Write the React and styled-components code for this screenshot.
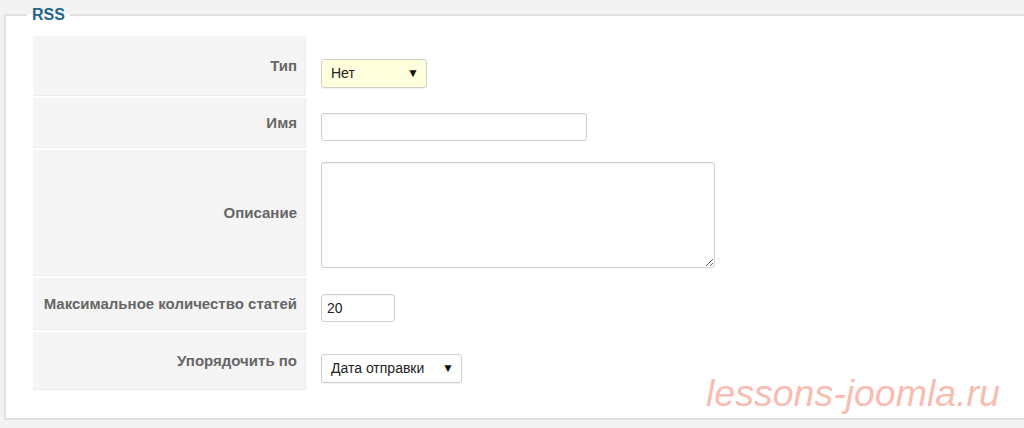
import React from 'react';
import styled, { createGlobalStyle } from 'styled-components';

const GlobalStyle = createGlobalStyle`
  html, body {
    margin: 0;
    padding: 0;
    background: #f3f3f3;
    overflow: hidden;
  }
  body {
    font-family: "Liberation Sans", Arial, sans-serif;
  }
`;

const fields = [
  { label: 'Тип', height: 60, control: 'type' },
  { label: 'Имя', height: 50, control: 'name' },
  { label: 'Описание', height: 126, control: 'description' },
  { label: 'Максимальное количество статей', height: 52, control: 'count' },
  { label: 'Упорядочить по', height: 58, control: 'order' },
];

export default function App() {
  const renderControl = (kind) => {
    switch (kind) {
      case 'type':
        return (
          <Select width={106} highlight>
            <span>Нет</span>
            <Arrow>▼</Arrow>
          </Select>
        );
      case 'name':
        return <TextInput width={266} />;
      case 'description':
        return <TextArea />;
      case 'count':
        return <TextInput width={74} defaultValue="20" />;
      case 'order':
        return (
          <Select width={141}>
            <span>Дата отправки</span>
            <Arrow>▼</Arrow>
          </Select>
        );
      default:
        return null;
    }
  };

  return (
    <>
      <GlobalStyle />
      <Page>
        <Fieldset>
          <Legend>RSS</Legend>
          <Table>
            {fields.map((f) => (
              <Row key={f.label} height={f.height}>
                <Key>{f.label}</Key>
                <Value>{renderControl(f.control)}</Value>
              </Row>
            ))}
          </Table>
        </Fieldset>
        <Watermark>lessons-joomla.ru</Watermark>
      </Page>
    </>
  );
}

const Page = styled.div`
  position: relative;
  height: 428px;
  padding-top: 6px;
  box-sizing: border-box;
`;

const Fieldset = styled.fieldset`
  margin: 0 -30px 0 4px;
  padding: 0;
  border: 2px solid #e0e0e0;
  background: #fff;
  min-inline-size: 0;
`;

const Legend = styled.legend`
  margin-left: 21px;
  padding: 0 5px;
  font-family: "Liberation Sans", Arial, sans-serif;
  font-weight: bold;
  font-size: 16px;
  line-height: 18px;
  color: #1d6688;
`;

const Table = styled.div`
  display: flex;
  flex-direction: column;
  gap: 2px;
  padding: 12px 0 28px 27px;
`;

const Row = styled.div`
  display: grid;
  grid-template-columns: 273px 1fr;
  height: ${(p) => p.height}px;
`;

const Key = styled.div`
  display: flex;
  align-items: center;
  justify-content: flex-end;
  padding-right: 8px;
  background: #f5f5f5;
  border-bottom: 1px solid #ececec;
  border-right: 1px solid #ececec;
  font-size: 15px;
  font-weight: bold;
  color: #666;
  white-space: nowrap;
`;

const Value = styled.div`
  display: flex;
  align-items: center;
  padding: 8px 0 0 15px;
`;

const Select = styled.div`
  display: flex;
  align-items: center;
  justify-content: space-between;
  width: ${(p) => p.width}px;
  height: 29px;
  margin-top: 6px;
  box-sizing: border-box;
  padding: 0 7px 0 9px;
  border: 1px solid #cfcfcf;
  border-radius: 3px;
  background: ${(p) => (p.highlight ? '#ffffdc' : '#fff')};
  box-shadow: 0 1px 1px rgba(0, 0, 0, 0.06);
  font-size: 14px;
  color: #222;
`;

const Arrow = styled.span`
  font-size: 12px;
  color: #111;
`;

const TextInput = styled.input`
  width: ${(p) => p.width}px;
  height: 28px;
  box-sizing: border-box;
  padding: 0 5px;
  border: 1px solid #cfcfcf;
  border-radius: 3px;
  background: #fff;
  box-shadow: inset 0 1px 1px rgba(0, 0, 0, 0.05);
  font-family: "Liberation Sans", Arial, sans-serif;
  font-size: 14px;
  color: #222;
  outline: none;
`;

const TextArea = styled.textarea`
  width: 394px;
  height: 106px;
  box-sizing: border-box;
  border: 1px solid #cfcfcf;
  border-radius: 3px;
  background: #fff;
  box-shadow: inset 0 1px 1px rgba(0, 0, 0, 0.05);
  font-family: "Liberation Sans", Arial, sans-serif;
  font-size: 14px;
  outline: none;
  margin-bottom: 4px;
`;

const Watermark = styled.div`
  position: absolute;
  left: 706px;
  top: 372px;
  font-family: "Liberation Sans", Arial, sans-serif;
  font-style: italic;
  font-size: 37.5px;
  color: #f8bcb1;
  pointer-events: none;
`;
